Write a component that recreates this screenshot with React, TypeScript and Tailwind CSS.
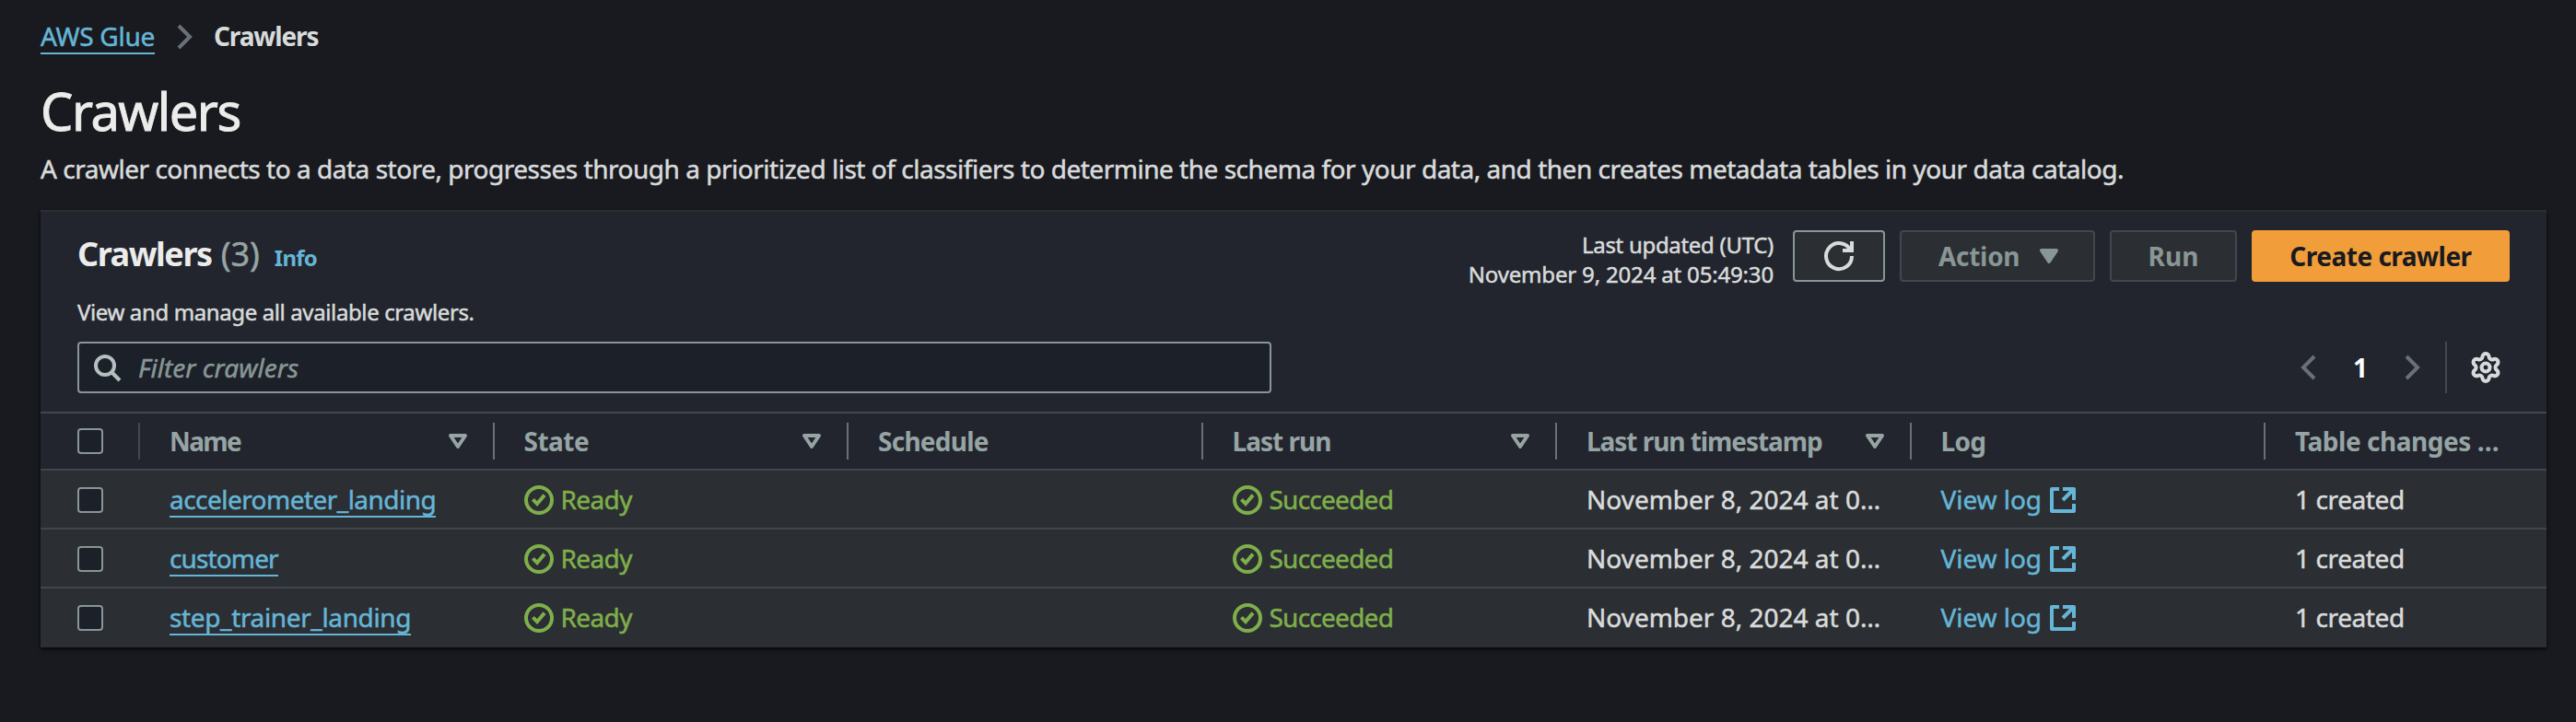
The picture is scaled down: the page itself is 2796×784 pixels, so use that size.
import type { ReactNode } from "react";
import { Settings } from "lucide-react";

function Icon({ children, className = "", fill = "none" }: { children: ReactNode; className?: string; fill?: string }) {
  return (
    <svg viewBox="0 0 16 16" className={`block size-8 shrink-0 overflow-visible ${className}`} fill={fill} stroke="currentColor" strokeWidth="2">
      {children}
    </svg>
  );
}

const AngleRight = ({ className = "" }) => (
  <Icon className={className}>
    <path d="m5 2 6 6-6 6" />
  </Icon>
);
const AngleLeft = ({ className = "" }) => (
  <Icon className={className}>
    <path d="M11 2 5 8l6 6" />
  </Icon>
);
const Caret = ({ className = "", filled = false }) => (
  <Icon className={className} fill={filled ? "currentColor" : "none"}>
    <path d="M4 5h8l-4 6-4-6Z" strokeLinejoin="round" />
  </Icon>
);
const StatusOk = () => (
  <Icon className="mt-[2px]">
    <circle cx="8" cy="8" r="7" />
    <path d="m4.7 7.7 2.3 2.3 4-4.7" />
  </Icon>
);
const External = () => (
  <Icon className="mt-[2px]">
    <path d="M6 2H2v12h12v-4" strokeLinejoin="round" />
    <path d="M8 2h6v6" strokeLinejoin="round" />
    <path d="M14 2 8 8" />
  </Icon>
);

function Checkbox({ className = "" }) {
  return <span className={`block size-7 rounded-[4px] border-2 border-[#889695] bg-[#1c2029] ${className}`} />;
}

const GRID = "grid grid-cols-[106px_384.5px_384.5px_384.5px_384.5px_384.5px_384.5px_1fr]";

const BOLD = "font-bold [-webkit-text-stroke:0]";

const COLUMNS = [
  { label: "Name", sortable: true, tracking: "tracking-[-1.6px]" },
  { label: "State", sortable: true, tracking: "tracking-[-0.5px]" },
  { label: "Schedule", sortable: false, tracking: "tracking-[-0.75px]" },
  { label: "Last run", sortable: true, tracking: "tracking-[-1px]" },
  { label: "Last run timestamp", sortable: true, tracking: "tracking-[-1.05px]" },
  { label: "Log", sortable: false, tracking: "tracking-[-0.7px]" },
  { label: "Table changes …", sortable: false, tracking: "tracking-[-0.45px]" },
];

const ROWS = [
  { name: "accelerometer_landing", tracking: "tracking-[-0.54px]" },
  { name: "customer", tracking: "tracking-[-0.87px]" },
  { name: "step_trainer_landing", tracking: "tracking-[-0.36px]" },
];

function Row({ name, tracking, last }: { name: string; tracking: string; last: boolean }) {
  return (
    <div className={`${GRID} h-16 items-center bg-[#2b2e32] text-[28px] leading-10 whitespace-nowrap ${last ? "pb-[2px]" : "border-b-2 border-[#42464e]"}`}>
      <div className="pt-[2px] pl-10">
        <Checkbox />
      </div>
      <div className="flex pl-[34px]">
        <a className={`h-10 border-b-2 border-[#65b5d6] text-[#65b5d6] ${tracking}`}>{name}</a>
      </div>
      <div className="flex items-center gap-2 pl-[34px] text-[#7eaf4b]">
        <StatusOk />
        <span className="tracking-[-0.6px]">Ready</span>
      </div>
      <div />
      <div className="flex items-center gap-2 pl-[34px] text-[#7eaf4b]">
        <StatusOk />
        <span className="tracking-[-0.75px]">Succeeded</span>
      </div>
      <div className="pl-[34px]">November 8, 2024 at 0…</div>
      <div className="flex items-center gap-[7px] pl-[34px] text-[#65b5d6]">
        <span className="tracking-[-0.05px]">View log</span>
        <External />
      </div>
      <div className="pl-[34px] tracking-[-0.4px]">1 created</div>
    </div>
  );
}

export default function App() {
  return (
    <div className="h-[784px] w-[2796px] overflow-hidden bg-[#191a1f] pr-8 pl-11 font-['Noto_Sans',sans-serif] text-[#d8dbdb] [-webkit-text-stroke:0.5px]">
      <nav className="flex h-[59px] items-end text-[28px] leading-10">
        <a className="h-10 border-b-2 border-[#65b5d6] tracking-[-0.28px] text-[#65b5d6]">AWS Glue</a>
        <AngleRight className="mb-[3px] ml-4 text-[#68707a]" />
        <span className={`ml-4 tracking-[-1.1px] ${BOLD}`}>Crawlers</span>
      </nav>
      <h1 className="mt-[29px] text-[56px] leading-[64px] tracking-[-1.5px] text-[#ececeb] [-webkit-text-stroke:0.9px]">Crawlers</h1>
      <p className="mt-[11px] text-[28px] leading-10 tracking-[-0.48px] whitespace-nowrap">
        A crawler connects to a data store, progresses through a prioritized list of classifiers to determine the schema for your data, and then creates metadata tables in your data catalog.
      </p>

      <section className="mt-[25px] h-[475px] w-[2720px] border-t-2 border-[#2b2e32] bg-[#22252d] shadow-[0_2px_4px_rgba(0,0,0,0.8)]">
        <div className="flex h-[141px] justify-between pr-10 pl-10">
          <div className="pt-6">
            <div className="flex h-[44px] items-baseline leading-[44px]">
              <h2 className={`text-[36px] leading-[44px] tracking-[-1.45px] text-[#ececeb] ${BOLD}`}>Crawlers</h2>
              <span className="ml-[10px] text-[36px] text-[#96a4a4]">(3)</span>
              <a className={`ml-[16px] text-[24px] tracking-[-0.8px] text-[#65b5d6] ${BOLD}`}>Info</a>
            </div>
            <p className="mt-[23px] text-[24px] leading-9 tracking-[-0.38px]">View and manage all available crawlers.</p>
          </div>
          <div className={`flex items-start gap-4 pt-5 text-[28px] ${BOLD}`}>
            <div className="mr-[5px] text-right text-[24px] leading-8 font-normal tracking-[-0.17px] [-webkit-text-stroke:0.5px]">
              <div className="tracking-[-0.3px]">Last updated (UTC)</div>
              <div>November 9, 2024 at 05:49:30</div>
            </div>
            <button className="flex h-14 w-[100px] items-center justify-center rounded-[4px] border-2 border-[#889695] bg-[#2b2e32]">
              <Icon>
                <path d="M10 5h5V0" />
                <path d="M15 8a7 7 0 1 1-.7-3" />
              </Icon>
            </button>
            <button className="flex h-14 w-[212px] items-center rounded-[4px] border-2 border-[#42464e] bg-[#2b2e32] pl-10 text-[#889695]">
              <span className="w-[104px] text-left tracking-[-0.3px]">Action</span>
              <Caret filled />
            </button>
            <button className="flex h-14 w-[138px] items-center justify-center rounded-[4px] border-2 border-[#42464e] bg-[#2b2e32] text-[#889695]">Run</button>
            <button className="flex h-14 w-[280px] items-center justify-center rounded-[4px] bg-[#f09d3a] tracking-[-0.5px] text-[#191a1f]">Create crawler</button>
          </div>
        </div>

        <div className="flex h-14 items-center justify-between pr-[49px] pl-10">
          <div className="flex h-14 w-[1296px] items-center rounded-[4px] border-2 border-[#889695] bg-[#1c2029] pl-[14px]">
            <Icon className="text-[#b4bfbf]">
              <circle cx="7" cy="7" r="5" />
              <path d="m10.5 10.5 4.5 4.5" />
            </Icon>
            <span className="ml-[18px] text-[28px] tracking-[0.05px] text-[#889695] italic">Filter crawlers</span>
          </div>
          <div className="flex h-14 items-center">
            <AngleLeft className="text-[#68707a]" />
            <span className={`w-20 text-center text-[28px] text-white ${BOLD}`}>1</span>
            <AngleRight className="text-[#68707a]" />
            <span className="ml-5 h-14 w-[2px] bg-[#42464e]" />
            <Settings className="-mr-px ml-6" size={36} strokeWidth={2.7} />
          </div>
        </div>

        <div className={`${GRID} mt-5 h-16 items-center border-y-2 border-[#42464e] text-[28px] text-[#96a4a4] ${BOLD}`}>
          <div className="pl-10">
            <Checkbox />
          </div>
          {COLUMNS.map((c, i) => (
            <div key={c.label} className={`flex h-10 items-center justify-between border-l-2 pr-[22px] pl-8 whitespace-nowrap ${i === 0 ? "border-[#42464e]" : "border-[#68707a]"}`}>
              <span className={c.tracking}>{c.label}</span>
              {c.sortable && <Caret />}
            </div>
          ))}
        </div>

        {ROWS.map((r, i) => (
          <Row key={r.name} name={r.name} tracking={r.tracking} last={i === ROWS.length - 1} />
        ))}
      </section>
    </div>
  );
}
